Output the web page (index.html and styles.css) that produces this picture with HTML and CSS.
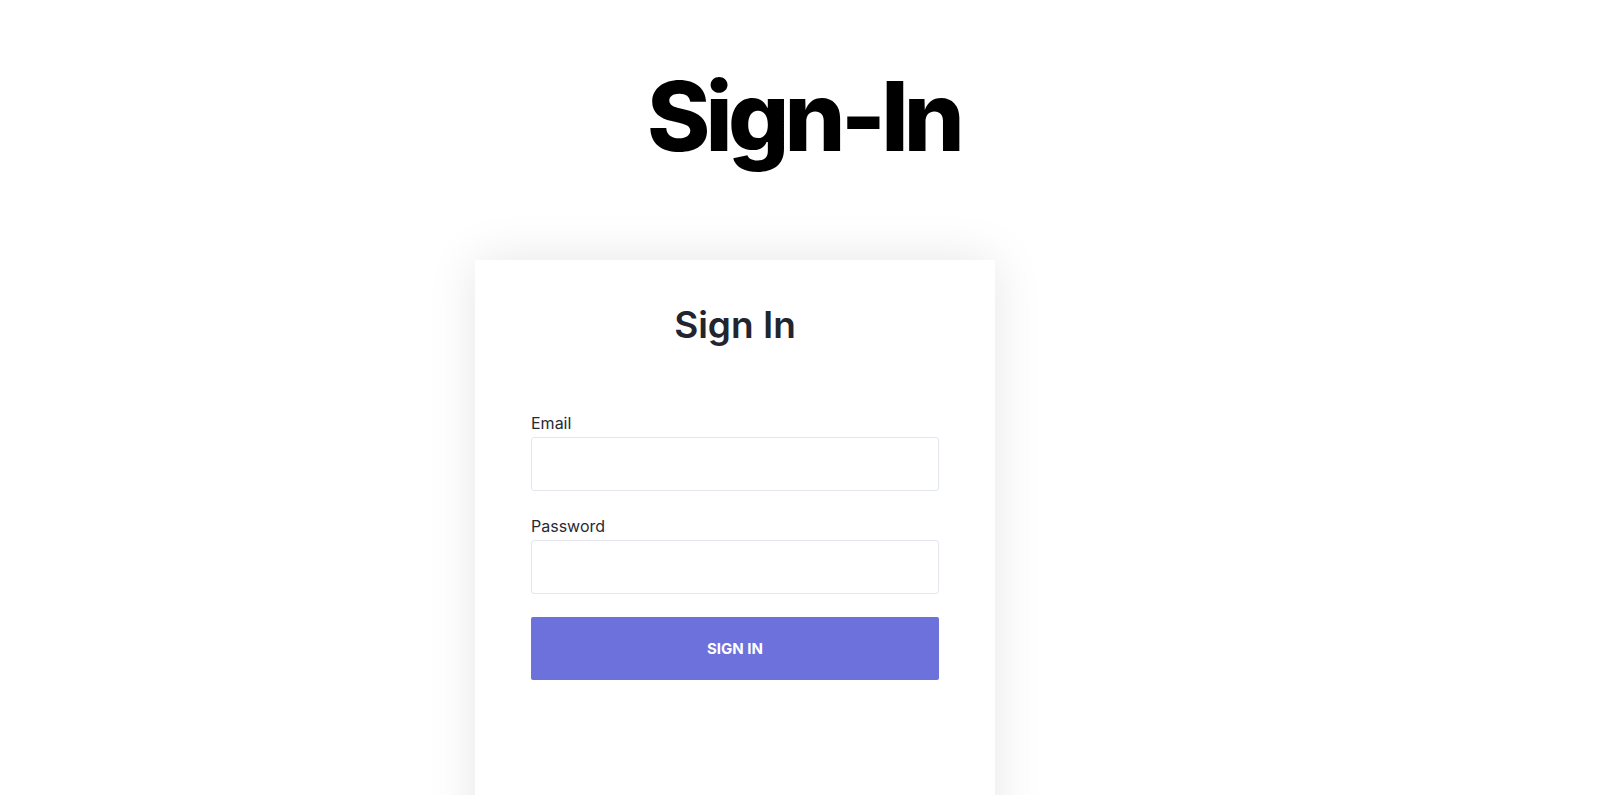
FILE: index.html
```html
<!DOCTYPE html>
<html lang="en">
<head>
  <meta charset="UTF-8">
  <meta name="viewport" content="width=device-width, initial-scale=1.0">
  <title>Sign-In</title>
  <link rel="stylesheet" href="styles.css">
</head>
<body>
  <h1 class="page-title">Sign-In</h1>

  <div class="card">
    <h2 class="card-title">Sign In</h2>
    <form class="signin-form">
      <label for="email">Email</label>
      <input id="email" type="email">

      <label for="password">Password</label>
      <input id="password" type="password">

      <button type="submit" class="btn-signin">SIGN IN</button>
    </form>
  </div>
</body>
</html>
```

FILE: styles.css
```css
html, body {
  overflow: hidden;
}

body {
  font-family: Inter, "Noto Sans", sans-serif;
  background-color: #fff;
  margin: 0;
  padding: 0;
  height: 795px;
}

.page-title {
  margin: 59px 0 0;
  padding-left: 7px;
  text-align: center;
  font-size: 96px;
  font-weight: 800;
  line-height: 115px;
  letter-spacing: -0.05em;
  color: #000;
}

.card {
  width: 520px;
  min-height: 600px;
  box-sizing: border-box;
  margin: 86px 0 0 475px;
  padding: 43px 56px;
  background-color: #fff;
  border-radius: 2px;
  box-shadow: 0 0 50px rgba(0, 0, 0, 0.1);
}

.card-title {
  margin: 0 0 64px;
  text-align: center;
  font-size: 37px;
  font-weight: 600;
  line-height: 44px;
  color: #22252d;
}

.signin-form {
  display: flex;
  flex-direction: column;
}

.signin-form label {
  font-size: 16px;
  line-height: 24px;
  color: #262a36;
  margin-bottom: 2px;
}

.signin-form input {
  height: 54px;
  padding: 0 14px;
  margin-bottom: 24px;
  border: 1px solid #e3e6ef;
  border-radius: 3px;
  box-sizing: border-box;
  font-size: 16px;
  outline: none;
}

.signin-form input + label {
  margin-top: -1px;
}

.btn-signin {
  height: 63px;
  margin-top: -1px;
  border: none;
  border-radius: 2px;
  background-color: #6c71dc;
  color: #fff;
  font-family: Inter, "Noto Sans", sans-serif;
  font-size: 15px;
  font-weight: 700;
  cursor: pointer;
}
```
